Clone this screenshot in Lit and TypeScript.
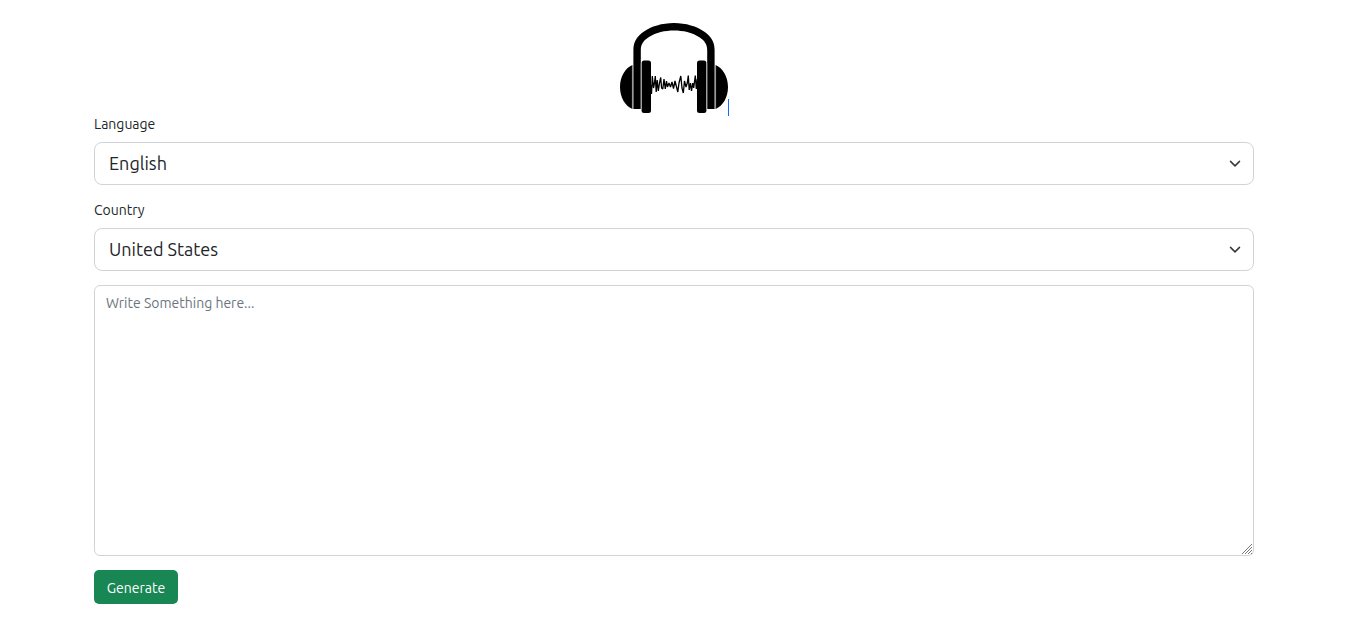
import { LitElement, html, css } from "lit";
import { customElement } from "lit/decorators.js";

@customElement("app-root")
export class AppRoot extends LitElement {
  static styles = css`
    :host {
      display: block;
      font-family: Ubuntu, "Noto Sans", sans-serif;
      font-size: 14px;
      line-height: 22px;
      color: #212529;
      background: #fff;
    }
    *, *::before, *::after {
      box-sizing: border-box;
    }
    .container {
      max-width: 1180px;
      margin: 0 auto;
      padding: 23px 10px;
    }
    .brand {
      display: flex;
      justify-content: center;
    }
    .brand-link {
      position: relative;
      display: block;
    }
    .logo {
      display: block;
      width: 108px;
      height: 90px;
    }
    .brand-link::after {
      content: "";
      position: absolute;
      left: 100%;
      bottom: -3px;
      width: 1px;
      height: 17px;
      background: #0d6efd;
    }
    .form {
      display: flex;
      flex-direction: column;
      align-items: stretch;
      gap: 14px;
    }
    .field {
      display: flex;
      flex-direction: column;
      gap: 7px;
    }
    .control {
      display: block;
      width: 100%;
      margin: 0;
      font-family: inherit;
      color: inherit;
      background-color: #fff;
      border: 1px solid #ced4da;
    }
    .select {
      appearance: none;
      height: 43px;
      padding: 6px 40px 6px 14px;
      font-size: 18px;
      line-height: 27px;
      border-radius: 8px;
    }
    .select-wrap {
      display: grid;
      align-items: center;
    }
    .select-wrap > * {
      grid-area: 1 / 1;
    }
    .chevron {
      justify-self: end;
      width: 12px;
      height: 12px;
      margin-right: 13px;
      pointer-events: none;
    }
    .textarea {
      height: 271px;
      padding: 6px 11px;
      font-size: 14px;
      line-height: 22px;
      border-radius: 6px;
      resize: vertical;
    }
    .textarea::placeholder {
      color: #6c757d;
      opacity: 1;
    }
    .textarea::-webkit-resizer {
      background: url("data:image/svg+xml,%3Csvg xmlns='http://www.w3.org/2000/svg' width='15' height='15'%3E%3Cpath d='M4 14L14 4M7 14l7-7M10 14l4-4M13 14l1-1' stroke='%23777' stroke-width='1'/%3E%3C/svg%3E") right bottom no-repeat;
    }
    .button {
      align-self: flex-start;
      height: 34px;
      padding: 1px 12px 0;
      font-family: inherit;
      font-size: 14px;
      line-height: 22px;
      color: #fff;
      background: #198754;
      border: 0;
      min-width: 84px;
      border-radius: 5px;
      cursor: pointer;
    }
  `;

  private chevron() {
    return html`<svg class="chevron" viewBox="0 0 16 16" aria-hidden="true">
      <path d="m2 4.500 6 6 6-6" fill="none" stroke="#343a40" stroke-width="2" stroke-linecap="round" stroke-linejoin="round" />
    </svg>`;
  }

  render() {
    return html`
      <main class="container">
        <header class="brand">
          <a class="brand-link" href="#" aria-label="Home">
            <svg class="logo" viewBox="0 0 108 90" aria-hidden="true">
              <path d="M12.4 42C5 45 0 54 0 64s5 19 12.4 22zM95.6 42C103 45 108 54 108 64s-5 19-12.4 22z" />
              <path d="M12.4 42v44M95.6 42v44" stroke="#999" stroke-width=".7" />
              <path d="M13.4 86V27C13.4 19 17 13 24 8.5C31 3.5 42 0 54 0S77 3.5 84 8.5C91 13 94.6 19 94.6 27v59h-7.4V27C87.2 21 84 17 79 14C72 9.5 63 7.5 54 7.5S36 9.5 29 14C24 17 20.8 21 20.8 27v59z" />
              <rect x="21.6" y="37.5" width="9.4" height="52.5" rx="2.5" />
              <rect x="77" y="37.5" width="9.4" height="52.5" rx="2.5" />
              <path d="M21.2 40v46M86.8 40v46" stroke="#aaa" stroke-width=".7" />
              <path d="M31 62L31.5 71 32.3 53 33.5 65 34.5 60 35.3 53 36.2 69 37.2 57 38.3 68 39.5 60 40.7 54.5 41.6 65 42.8 66 44 56 45.3 66 46.5 58 47.5 64 49 60 50.5 64 52 59 53.5 65.5 55 58 56.3 63 57.8 69 59 60 60.8 53 62 65 63.3 70 64.5 58 66 64 67.3 60 68.3 52.5 69.2 67 70.5 60 71.5 68 72.8 60 73.7 65 75.3 52.5 76.3 66 77.3 56" fill="none" stroke="#000" stroke-width="1.3" stroke-linejoin="bevel" />
            </svg>
          </a>
        </header>
        <form class="form" @submit=${(event: Event) => event.preventDefault()}>
          <div class="field">
            <label for="language">Language</label>
            <div class="select-wrap">
              <select id="language" class="control select"><option>English</option></select>
              ${this.chevron()}
            </div>
          </div>
          <div class="field">
            <label for="country">Country</label>
            <div class="select-wrap">
              <select id="country" class="control select"><option>United States</option></select>
              ${this.chevron()}
            </div>
          </div>
          <textarea class="control textarea" aria-label="Text" placeholder="Write Something here..."></textarea>
          <button class="button" type="submit">Generate</button>
        </form>
      </main>
    `;
  }
}
